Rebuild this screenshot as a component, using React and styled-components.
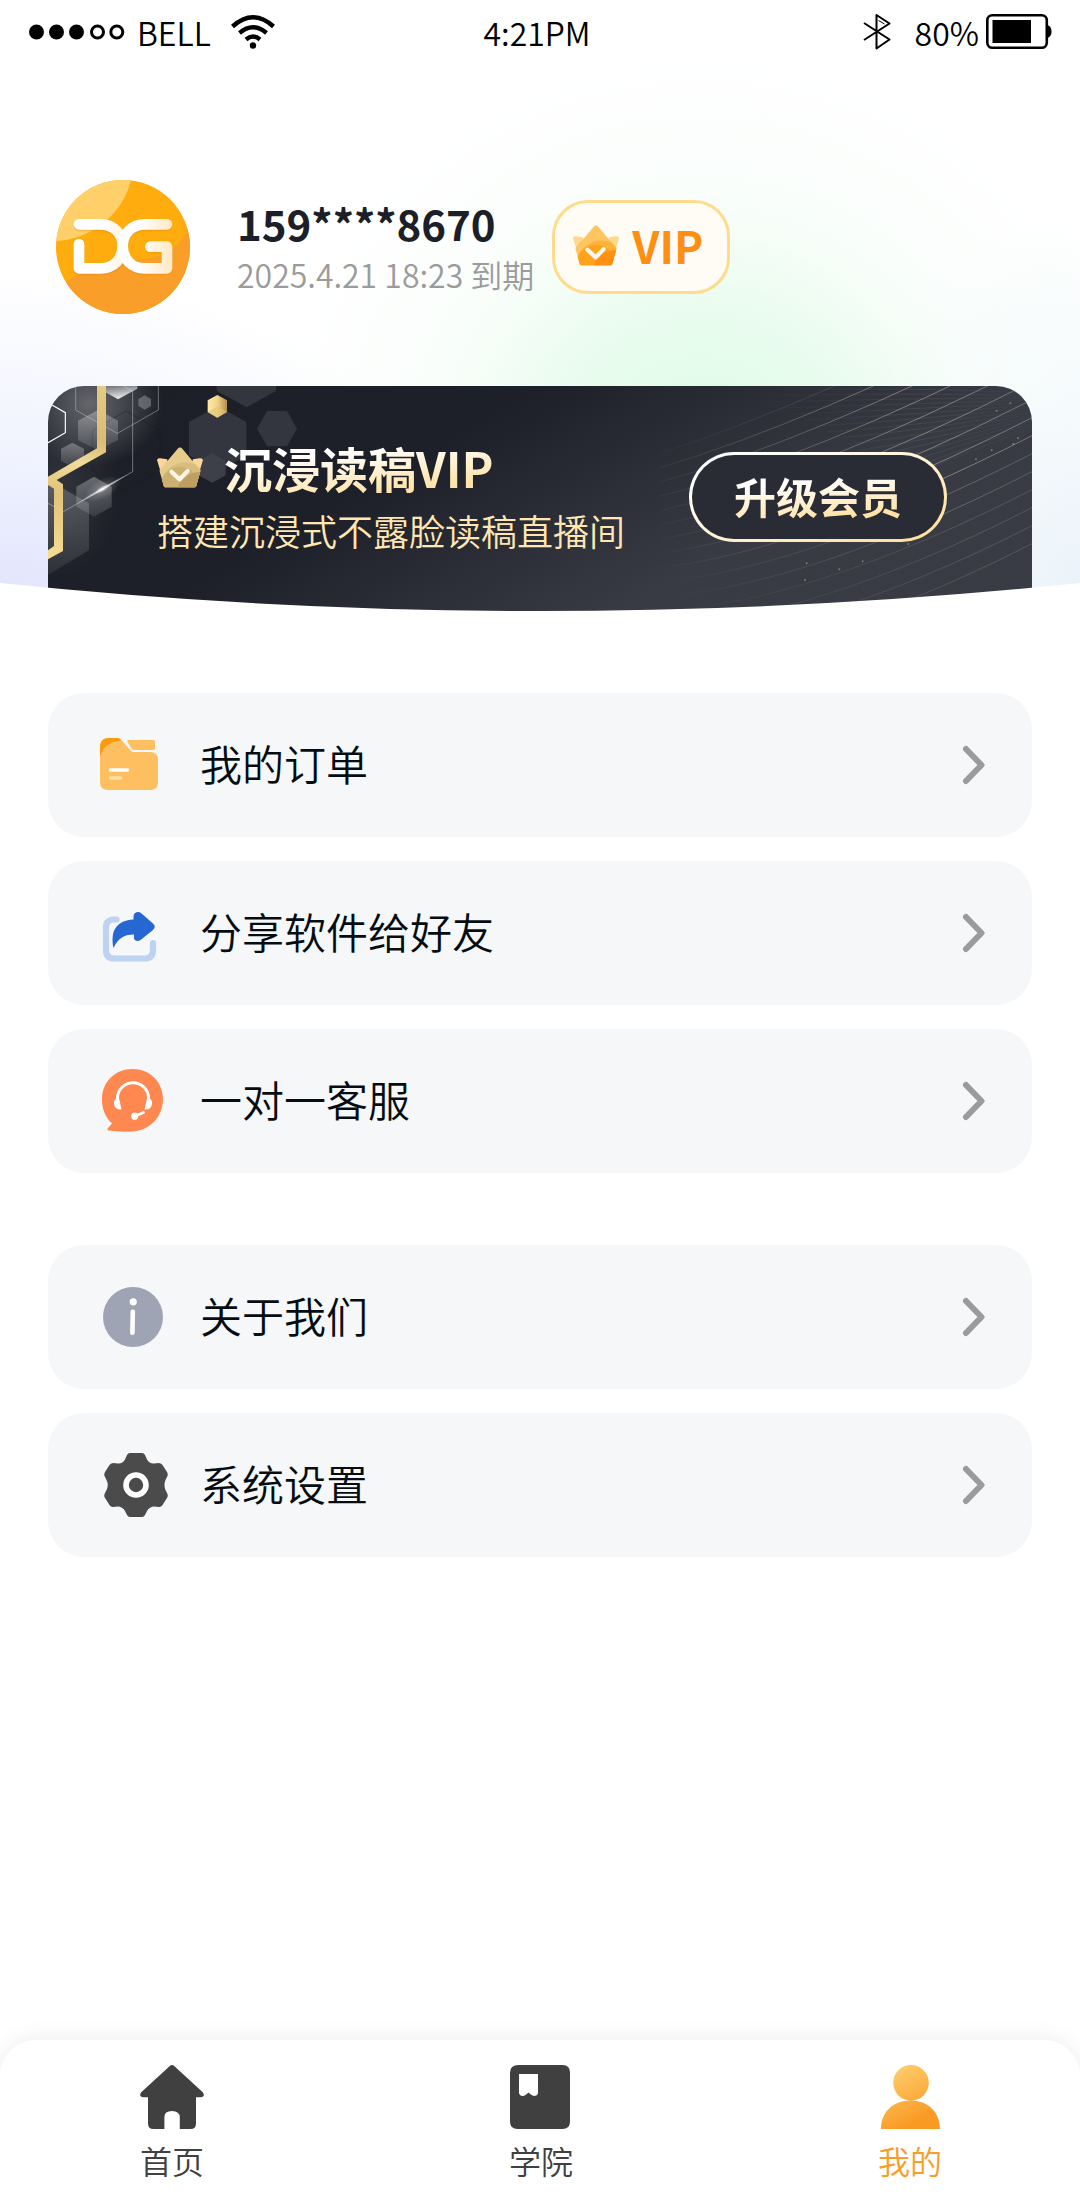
import React from "react";
import styled, { createGlobalStyle } from "styled-components";

const GlobalStyle = createGlobalStyle`
  *, *::before, *::after { box-sizing: border-box; }
  body {
    margin: 0;
    background: #fff;
    color: #060d12;
    font-family: "Noto Sans CJK SC", "Noto Sans", sans-serif;
    font-weight: 350;
  }
  svg { display: block; flex: none; }
`;

const Page = styled.div`
  min-height: 100vh;
  display: flex;
  flex-direction: column;
`;

const Hero = styled.header`
  position: relative;
  background:
    radial-gradient(ellipse 450px 420px at 65% 450px, #dcfbe5 0%, rgba(228, 251, 234, 0.85) 30%, rgba(243, 253, 246, 0.4) 62%, rgba(255, 255, 255, 0) 100%),
    radial-gradient(ellipse 480px 330px at 0% 600px, #e1e4fd 0%, rgba(236, 239, 254, 0.75) 45%, rgba(255, 255, 255, 0) 100%),
    radial-gradient(ellipse 280px 380px at 100% 600px, #e8f0fa 0%, rgba(240, 246, 252, 0.7) 45%, rgba(255, 255, 255, 0) 100%),
    #fff;
`;

const StatusBar = styled.div`
  height: 64px;
  padding: 0 28px 0 22px;
  display: grid;
  grid-template-columns: 1fr auto 1fr;
  align-items: center;
  font-size: 32px;
  line-height: 40px;
  color: #000;
`;

const StatusGroup = styled.div`
  display: flex;
  align-items: center;
  justify-content: ${(p) => (p.$end ? "flex-end" : "flex-start")};
  gap: ${(p) => p.$gap}px;
`;

const Profile = styled.section`
  display: flex;
  align-items: center;
  padding: 116px 48px 72px 56px;
`;

const Account = styled.div`
  margin-left: 47px;
  margin-right: 18px;
`;

const Phone = styled.h1`
  margin: 0;
  font-size: 42px;
  line-height: 54px;
  font-weight: 700;
  color: #1c1f28;
`;

const Expiry = styled.p`
  margin: 0;
  font-size: 32px;
  line-height: 48px;
  color: #9b9b9b;
`;

const VipBadge = styled.span`
  display: flex;
  align-items: center;
  gap: 13px;
  height: 94px;
  padding: 0 24px 4px 18px;
  border: 3px solid #ffdc8c;
  border-radius: 36px;
  background: #fffcf6;
  color: #ff8f12;
  font-size: 44px;
  line-height: 60px;
  font-weight: 700;
`;

const Banner = styled.section`
  position: relative;
  overflow: hidden;
  margin: 0 48px;
  padding: 48px 85px 52px 109px;
  display: flex;
  align-items: center;
  justify-content: space-between;
  border-radius: 36px 36px 0 0;
  background: linear-gradient(150deg, #1c1f27 0%, #1d2028 36%, #383b44 70%, #393c45 100%);
`;

const BannerArt = styled.svg`
  position: absolute;
  top: 0;
  ${(p) => p.$side}: 0;
`;

const BannerCopy = styled.div`
  position: relative;
`;

const BannerTitle = styled.h2`
  margin: 0;
  display: flex;
  align-items: center;
  gap: 21px;
  font-size: 48px;
  line-height: 66px;
  font-weight: 700;
`;

const GoldText = styled.span`
  background: linear-gradient(174deg, #fff 30%, #ffe3a6 80%);
  background-clip: text;
  -webkit-background-clip: text;
  color: transparent;
`;

const BannerNote = styled.p`
  margin: 0;
  font-size: 36px;
  line-height: 60px;
  color: #ffe6b3;
`;

const UpgradeButton = styled.button`
  position: relative;
  height: 90px;
  padding: 0 42px 2px;
  border: 3px solid transparent;
  border-radius: 45px;
  background:
    linear-gradient(#292c35, #292c35) padding-box,
    linear-gradient(160deg, #fff 20%, #ffe1a0 90%) border-box;
  font-family: inherit;
  font-size: 42px;
  line-height: 60px;
  font-weight: 700;
  cursor: pointer;
`;

const Curve = styled.svg`
  position: absolute;
  left: 0;
  bottom: 0;
  width: 100%;
  height: 29px;
`;

const Menu = styled.main`
  display: grid;
  gap: 72px;
  padding: 81px 48px 72px;
`;

const MenuGroup = styled.nav`
  display: grid;
  gap: 24px;
`;

const MenuRow = styled.a`
  display: flex;
  align-items: center;
  height: 144px;
  padding: 0 47px 0 48px;
  border-radius: 36px;
  background: #f5f7f9;
  color: inherit;
  text-decoration: none;
`;

const MenuLabel = styled.span`
  flex: 1;
  margin-left: 32px;
  padding-bottom: 4px;
  font-size: 42px;
  line-height: 60px;
`;

const TabBar = styled.nav`
  margin-top: auto;
  display: flex;
  justify-content: space-between;
  height: 160px;
  padding: 25px 138px 0 140px;
  border-radius: 36px 36px 0 0;
  background: #fff;
  box-shadow: 0 0 24px rgba(0, 0, 0, 0.08);
`;

const Tab = styled.a`
  display: flex;
  flex-direction: column;
  align-items: center;
  gap: 8px;
  font-size: 32px;
  line-height: 46px;
  color: ${(p) => (p.$active ? "#fa9c28" : "#404040")};
  text-decoration: none;
`;

const SignalDots = () => (
  <svg width="103" height="16" viewBox="22 24 103 16" aria-hidden="true">
    {[36.5, 56.5, 76.5].map((x) => (
      <circle key={x} cx={x} cy="32" r="7.5" />
    ))}
    {[97.5, 116.8].map((x) => (
      <circle key={x} cx={x} cy="32" r="6" fill="none" stroke="#000" strokeWidth="3" />
    ))}
  </svg>
);

const Wifi = () => (
  <svg width="44" height="36" viewBox="230 14 44 36" aria-hidden="true">
    <g fill="none" stroke="#000" strokeWidth="4.4">
      <path d="M231.5 26.5Q252 8 272.5 26.5" />
      <path d="M238.5 33Q252 21.5 265.5 33" />
      <path d="M245 39.5Q252 33.5 259 39.5" />
    </g>
    <circle cx="252" cy="45.5" r="3.2" />
  </svg>
);

const Bluetooth = () => (
  <svg width="28" height="36" viewBox="861.5 14 28 36" aria-hidden="true">
    <path d="M862.5 23L888 39.5L875 48.5V15L888 23.5L862.5 40" fill="none" stroke="#000" strokeWidth="2" strokeLinejoin="round" />
    <path d="M877 20.5L883 24" stroke="#000" strokeWidth="1" />
  </svg>
);

const Battery = () => (
  <svg width="66" height="36" viewBox="985 16 66 36" aria-hidden="true">
    <rect x="986.3" y="17.3" width="59.5" height="32.4" rx="5" fill="none" stroke="#000" strokeWidth="2.6" />
    <rect x="991.5" y="22" width="38.5" height="23" />
    <path d="M1046 27.5h1.5q3 1.5 3 6t-3 6h-1.5z" />
  </svg>
);

const Avatar = () => (
  <svg width="134" height="134" viewBox="48 60 402 402" role="img" aria-label="DG">
    <defs>
      <clipPath id="avatarClip">
        <circle cx="249" cy="261" r="201" />
      </clipPath>
      <linearGradient id="dFill" gradientUnits="userSpaceOnUse" x1="100" y1="0" x2="265" y2="0">
        <stop offset="0.6" stopColor="#fff" />
        <stop offset="1" stopColor="#fff0d6" />
      </linearGradient>
      <linearGradient id="gFill" gradientUnits="userSpaceOnUse" x1="232" y1="0" x2="396" y2="0">
        <stop offset="0.4" stopColor="#fff" />
        <stop offset="1" stopColor="#ffe9c4" />
      </linearGradient>
    </defs>
    <g clipPath="url(#avatarClip)">
      <rect x="48" y="60" width="402" height="402" fill="#ffac0e" />
      <path d="M450 180Q425 290 300 298Q160 300 70 372V470H460z" fill="#f99e28" />
      <circle cx="38" cy="0" r="243" fill="#ffd06a" />
    </g>
    <g fill="none" strokeWidth="32" strokeLinecap="round" strokeLinejoin="round">
      <g stroke="#e88a10" opacity="0.35" transform="translate(0 5)">
        <path d="M117 193H182C220 193 248 220 248 259S220 325 182 325H117V252" />
        <path d="M381 193H314C276 193 248 220 248 259S276 325 314 325H381V260H331" />
      </g>
      <path d="M117 193H182C220 193 248 220 248 259S220 325 182 325H117V252" stroke="url(#dFill)" />
      <path d="M381 193H314C276 193 248 220 248 259S276 325 314 325H381V260H331" stroke="url(#gFill)" />
    </g>
  </svg>
);

const crownTones = {
  orange: { ear: "#ffd88a", top: "#ffc560", mid: "#ffb23a", low: "#ffa21c", deep: "#ff9012", tick: "#fff6ec" },
  gold: { ear: "#fbd59a", top: "#e6cb8c", mid: "#d9bd7e", low: "#ccb072", deep: "#bd9f62", tick: "#fff6e2" },
};

const Crown = ({ tone }) => {
  const c = crownTones[tone];
  return (
    <svg width="46" height="41" viewBox="518 192 140 124" aria-hidden="true">
      <clipPath id={`crown-${tone}`}>
        <path d="M583 195Q588 190 593 195L629 237L651 262L637 311Q636 315 631 315H545Q540 315 539 311L525 262L547 237Z" />
      </clipPath>
      <path d="M518 231Q520 224 528 226L549 229L560 300H539ZM658 231Q656 224 648 226L627 229L616 300H637Z" fill={c.ear} />
      <g clipPath={`url(#crown-${tone})`}>
        <rect x="518" y="190" width="140" height="126" fill={c.top} />
        <circle cx="605" cy="318" r="79" fill={c.mid} />
        <ellipse cx="588" cy="318" rx="62" ry="66" fill={c.low} />
        <circle cx="648" cy="340" r="72" fill={c.deep} />
      </g>
      <path d="M562 267L587 290L611 265" fill="none" stroke={c.tick} strokeWidth="13" strokeLinecap="round" strokeLinejoin="round" />
    </svg>
  );
};

const HexArt = () => (
  <BannerArt $side="left" width="260" height="225" viewBox="24 48 780 675" aria-hidden="true">
    <defs>
      <radialGradient id="glowTop">
        <stop offset="0" stopColor="#fff" stopOpacity="0.32" />
        <stop offset="1" stopColor="#fff" stopOpacity="0" />
      </radialGradient>
      <linearGradient id="band" gradientUnits="userSpaceOnUse" x1="24" y1="560" x2="200" y2="48">
        <stop offset="0" stopColor="#f6dc94" />
        <stop offset="0.35" stopColor="#e2c47a" />
        <stop offset="0.55" stopColor="#f2dc9c" />
        <stop offset="0.7" stopColor="#d9bb74" />
        <stop offset="1" stopColor="#e6cb84" />
      </linearGradient>
      <linearGradient id="nugget">
        <stop offset="0" stopColor="#ffe9a8" />
        <stop offset="0.5" stopColor="#f3d58a" />
        <stop offset="1" stopColor="#b28d4a" />
      </linearGradient>
      <linearGradient id="hexFade" x1="0" y1="0" x2="0" y2="1">
        <stop offset="0" stopColor="#fff" stopOpacity="0.3" />
        <stop offset="1" stopColor="#fff" stopOpacity="0.1" />
      </linearGradient>
      <linearGradient id="shine" x1="0.2" y1="0" x2="0.6" y2="1">
        <stop offset="0" stopColor="#fff" stopOpacity="0.25" />
        <stop offset="1" stopColor="#fff" stopOpacity="0.95" />
      </linearGradient>
      <radialGradient id="flare">
        <stop offset="0" stopColor="#fff" />
        <stop offset="0.3" stopColor="#fff" stopOpacity="0.6" />
        <stop offset="1" stopColor="#fff" stopOpacity="0" />
      </radialGradient>
    </defs>
    <ellipse cx="150" cy="100" rx="220" ry="190" fill="url(#glowTop)" />
    <ellipse cx="60" cy="360" rx="180" ry="260" fill="url(#glowTop)" opacity="0.3" />
    <g fill="#33363f">
      <path d="M530 48H708V62L620 112L530 62z" />
      <path d="M533 108L619 156V256L533 305L447 256V156z" />
      <path d="M651 176L681 123H741L771 176L741 229H681z" />
      <path d="M517 250L557 272V316L517 338L475 316V272z" fill="#3d4049" />
    </g>
    <path d="M258 123L360 182V300L258 360L157 300V182z" fill="none" stroke="#1a1c23" strokeWidth="2" opacity="0.6" />
    <path d="M24 330L147 400V540L24 615z" fill="url(#hexFade)" opacity="0.7" />
    <path d="M174 120L234 152V210L174 241L114 210V152z" fill="url(#hexFade)" />
    <path d="M97 218L132 236V272L97 292L63 272V236z" fill="url(#hexFade)" />
    <path d="M162 320L215 350V410L162 440L109 410V350z" fill="url(#hexFade)" />
    <path d="M314 76L333 87V108L314 119L295 108V87z" fill="#fff" opacity="0.25" />
    <path d="M195 48H292V56L234 88L195 66z" fill="url(#shine)" />
    <g fill="none" stroke="#d5d7dc" strokeWidth="2.5">
      <path d="M107 48V120L232 190L355 120V48" opacity="0.5" />
      <path d="M250 48L278 64V305L70 425L24 400" opacity="0.55" />
      <path d="M36 105L76 128V188L24 218" stroke="#fff" strokeWidth="3.5" />
    </g>
    <path d="M171 48H198V247L50 330L69 343V543L24 568V541L42 528V356L24 345V320L171 235z" fill="url(#band)" />
    <g transform="translate(187 357) rotate(-30)">
      <ellipse rx="60" ry="30" fill="url(#flare)" opacity="0.3" />
      <ellipse rx="92" ry="5" fill="url(#flare)" />
      <ellipse rx="26" ry="9" fill="url(#flare)" />
    </g>
    <path d="M532 75L561 91V126L532 143L503 126V91z" fill="url(#nugget)" />
    <path d="M532 108L561 126L532 143L503 126z" fill="#e3c378" opacity="0.6" />
  </BannerArt>
);

const waves = Array.from({ length: 15 }, (_, i) => {
  const end = i * 54 - 235;
  const start = 250 + i * 43;
  return `M300 ${start}Q750 ${end + 340} 1416 ${end}`;
});

const mesh = Array.from({ length: 16 }, (_, i) => `M${560 + i * 34} ${60 + i * 18}Q1050 ${50 + i * 17} 1416 ${70 + i * 7}`);

const sparks = [[1351, 100], [1295, 240], [1360, 222], [1248, 268], [1374, 205], [735, 630], [838, 598], [740, 580], [908, 574], [1045, 522], [1310, 122]];

const WaveArt = () => (
  <BannerArt $side="right" width="372" height="225" viewBox="300 48 1116 675" aria-hidden="true">
    <defs>
      <linearGradient id="waveInk" gradientUnits="userSpaceOnUse" x1="300" y1="620" x2="1416" y2="150">
        <stop offset="0" stopColor="#b9a88c" stopOpacity="0" />
        <stop offset="0.35" stopColor="#b9a88c" stopOpacity="0.3" />
        <stop offset="0.75" stopColor="#cabfae" stopOpacity="0.6" />
        <stop offset="1" stopColor="#b9b9b9" stopOpacity="0.5" />
      </linearGradient>
      <linearGradient id="meshInk" gradientUnits="userSpaceOnUse" x1="560" y1="0" x2="1416" y2="0">
        <stop offset="0" stopColor="#fff" stopOpacity="0" />
        <stop offset="0.6" stopColor="#fff" stopOpacity="0.1" />
        <stop offset="1" stopColor="#fff" stopOpacity="0.03" />
      </linearGradient>
    </defs>
    <g fill="none" stroke="url(#meshInk)" strokeWidth="2">
      {mesh.map((d) => <path key={d} d={d} />)}
    </g>
    <g fill="none" stroke="url(#waveInk)" strokeWidth="2.6">
      {waves.map((d, i) => (
        <path key={d} d={d} opacity={i === 0 || i > 10 ? 0.4 : i > 8 ? 0.6 : 1} />
      ))}
    </g>
    <g fill="#c9c2b4" opacity="0.45">
      {sparks.map(([x, y]) => <circle key={`${x}-${y}`} cx={x} cy={y} r="3" />)}
    </g>
  </BannerArt>
);

const MenuSvg = ({ children }) => (
  <svg width="72" height="72" viewBox="0 0 72 72" aria-hidden="true">{children}</svg>
);

const OrdersIcon = () => (
  <MenuSvg>
    <path d="M4 18Q4 9 13 9H22Q24 9 25.5 11L35 22Q36 23 38 23H54Q62 23 62 31V53Q62 61 54 61H12Q4 61 4 53z" fill="#fdbf60" />
    <path d="M4 27V18Q4 9 13 9H22Q24 9 25 11.5Q8 13 4.5 27z" fill="#fb9a0c" />
    <path d="M32 11H57Q59 11 59 13V19Q59 21 57 21H39Q37 21 36 20L31.5 13Q31 11 32 11z" fill="#fdbf60" />
    <path d="M14.5 41H31.5" stroke="#fff" strokeWidth="3.6" strokeLinecap="round" />
    <path d="M14.5 49H24.5" stroke="#fee0a8" strokeWidth="3.6" strokeLinecap="round" />
  </MenuSvg>
);

const ShareIcon = () => (
  <MenuSvg>
    <path d="M20.5 22.5H18Q10 22.5 10 30.5V53Q10 61.5 18 61.5H49Q57 61.5 57 53V46" fill="none" stroke="#bdd3f1" strokeWidth="6.2" strokeLinecap="round" />
    <path d="M17.5 51C14 33 21 23.5 37.5 22.5V19.5C37.5 15.5 42 14 45 16L57 26.5Q60.5 29.7 57 33L44.5 43Q40.5 45.5 38 42V37.5C27 37.5 22 42 17.5 51z" fill="#2767d1" />
  </MenuSvg>
);

const ServiceIcon = () => (
  <MenuSvg>
    <path d="M36.5 4C54 4 67 17 67 34C67 52 53 66.5 35 66.5Q22 67 12.5 65.5Q10.5 65 12 63L16 58.5C9 52 6 44 6 34C6 17 19 4 36.5 4z" fill="#ff8750" />
    <path d="M21.5 33A15.5 15.2 0 0 1 52.5 33" fill="none" stroke="#fff" strokeWidth="3" />
    <path d="M20.5 30.5L23 33L25.5 44.5Q18 44.5 18 38.5Q18 35 20 33.5zM53.5 30.5L51 33L48.5 44.5Q56 44.5 56 38.5Q56 35 54 33.5z" fill="#fff" />
    <ellipse cx="38.7" cy="51.2" rx="3.4" ry="3.7" fill="#fff" />
    <path d="M39.5 51L47.5 47.5" stroke="#fff" strokeWidth="2.8" strokeLinecap="round" />
  </MenuSvg>
);

const AboutIcon = () => (
  <MenuSvg>
    <circle cx="37" cy="36" r="30" fill="#9fa4b5" />
    <circle cx="37.2" cy="20.8" r="3.6" fill="#fff" />
    <path d="M36.8 30.8L36.4 51.8" stroke="#fff" strokeWidth="4.6" strokeLinecap="round" />
  </MenuSvg>
);

const SettingsIcon = () => (
  <MenuSvg>
    <path
      d="M34 4H46Q48 4 49 6L51 10.5Q53.5 15 58.5 14.5L62.5 14Q65 14 66.5 16L71 23Q72.5 25.5 71 28L69.5 31Q67.5 36 69.5 41L71 44Q72.5 46.5 71 49L66.5 56Q65 58.5 62.5 58L58.5 57.5Q53.5 57.5 51 62L49 66Q48 68 46 68H34Q32 68 31 66L29 62Q26.5 57.5 21.5 57.5L17.5 58Q15 58.5 13.5 56L9 49Q7.5 46.5 9 44L10.5 41Q13 36 10.5 31L9 28Q7.5 25.5 9 23L13.5 16Q15 14 17.5 14L21.5 14.5Q26.5 15 29 10.5L31 6Q32 4 34 4z"
      fill="#4b4b4b"
    />
    <circle cx="40" cy="36" r="10" fill="none" stroke="#fff" strokeWidth="5.6" />
  </MenuSvg>
);

const Chevron = () => (
  <svg width="24" height="40" viewBox="0 0 24 40" aria-hidden="true">
    <path d="M5 4L20.5 20L5 36" fill="none" stroke="#9a9b9d" strokeWidth="6" strokeLinecap="round" strokeLinejoin="round" />
  </svg>
);

const HomeIcon = () => (
  <svg width="64" height="64" viewBox="0 0 64 64" aria-hidden="true">
    <path d="M29.8 1Q32 -1 34.2 1L62.5 27Q64.5 29.5 63.5 31Q62.5 32.3 60.5 32.3H56V58.5Q56 64 50.5 64H39.8V52.5Q39.8 46 32 46T24.4 52.5V64H13.5Q8 64 8 58.5V32.3H3.5Q1.5 32.3 0.5 31Q-0.5 29.5 1.5 27z" fill="#404040" />
  </svg>
);

const AcademyIcon = () => (
  <svg width="64" height="64" viewBox="0 0 64 64" aria-hidden="true">
    <path d="M9.5 0H53.5Q61 0 61 7.5V56.5Q61 64 53.5 64H8.5Q1 64 1 56.5V7.5Q1 0 9.5 0z" fill="#404040" />
    <path d="M10 9H29V28.5Q28 31 25 31L22.5 30L19.5 27.5L16.5 30Q14 31.5 11.5 30.5L10 28.5z" fill="#fff" />
  </svg>
);

const MineIcon = () => (
  <svg width="64" height="64" viewBox="0 0 64 64" aria-hidden="true">
    <linearGradient id="mine" gradientUnits="userSpaceOnUse" x1="14" y1="0" x2="48" y2="64">
      <stop offset="0" stopColor="#ffd070" />
      <stop offset="0.85" stopColor="#f99a25" />
    </linearGradient>
    <path d="M33 0A17.8 17.8 0 0 1 33 35.6A17.8 17.8 0 0 1 33 0zM3 64C3 47 15 35.5 32.5 35.5S62 47 62 64z" fill="url(#mine)" />
  </svg>
);

const menuGroups = [
  [
    { label: "我的订单", Icon: OrdersIcon },
    { label: "分享软件给好友", Icon: ShareIcon },
    { label: "一对一客服", Icon: ServiceIcon },
  ],
  [
    { label: "关于我们", Icon: AboutIcon },
    { label: "系统设置", Icon: SettingsIcon },
  ],
];

const tabs = [
  { label: "首页", Icon: HomeIcon },
  { label: "学院", Icon: AcademyIcon },
  { label: "我的", Icon: MineIcon, active: true },
];

export default function App() {
  return (
    <Page>
      <GlobalStyle />
      <Hero>
        <StatusBar>
          <StatusGroup $gap={20}>
            <StatusGroup $gap={12}>
              <SignalDots />
              <span>BELL</span>
            </StatusGroup>
            <Wifi />
          </StatusGroup>
          <span>4:21PM</span>
          <StatusGroup $end $gap={7}>
            <StatusGroup $gap={24}>
              <Bluetooth />
              <span>80%</span>
            </StatusGroup>
            <Battery />
          </StatusGroup>
        </StatusBar>
        <Profile>
          <Avatar />
          <Account>
            <Phone>159****8670</Phone>
            <Expiry>2025.4.21 18:23 到期</Expiry>
          </Account>
          <VipBadge>
            <Crown tone="orange" />
            VIP
          </VipBadge>
        </Profile>
        <Banner>
          <HexArt />
          <WaveArt />
          <BannerCopy>
            <BannerTitle>
              <Crown tone="gold" />
              <GoldText>沉浸读稿VIP</GoldText>
            </BannerTitle>
            <BannerNote>搭建沉浸式不露脸读稿直播间</BannerNote>
          </BannerCopy>
          <UpgradeButton type="button">
            <GoldText>升级会员</GoldText>
          </UpgradeButton>
        </Banner>
        <Curve viewBox="0 0 1080 29" preserveAspectRatio="none" aria-hidden="true">
          <path d="M0 0Q540 56 1080 0V30H0z" fill="#fff" />
        </Curve>
      </Hero>
      <Menu>
        {menuGroups.map((group) => (
          <MenuGroup key={group[0].label}>
            {group.map(({ label, Icon }) => (
              <MenuRow key={label} href="#">
                <Icon />
                <MenuLabel>{label}</MenuLabel>
                <Chevron />
              </MenuRow>
            ))}
          </MenuGroup>
        ))}
      </Menu>
      <TabBar>
        {tabs.map(({ label, Icon, active }) => (
          <Tab key={label} href="#" $active={active}>
            <Icon />
            {label}
          </Tab>
        ))}
      </TabBar>
    </Page>
  );
}
